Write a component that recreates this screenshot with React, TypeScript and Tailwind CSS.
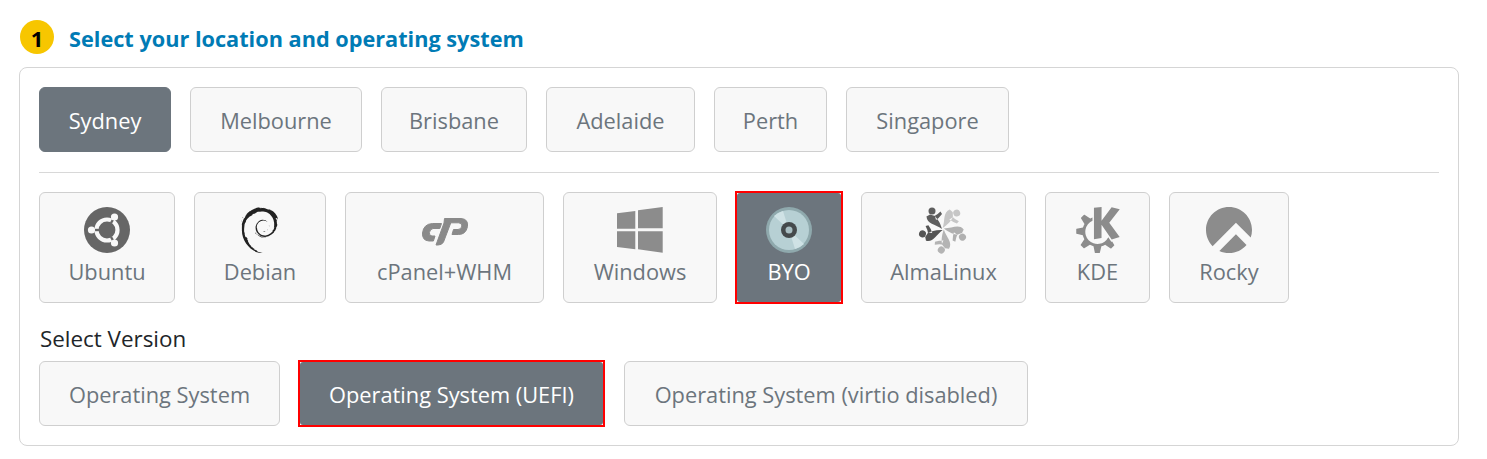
import React from "react";
import { SiDebian, SiKde, SiRockylinux } from "react-icons/si";

const font = "font-['Open_Sans','Noto_Sans',sans-serif]";

function Ubuntu() {
  return (
    <svg width="46" height="46" viewBox="0 0 46 46">
      <circle cx="23" cy="23" r="23" fill="#666666" />
      <circle cx="23" cy="23" r="10.5" fill="none" stroke="#f8f8f8" strokeWidth="4.2" />
      <g stroke="#666666" strokeWidth="2.4">
        <line x1="27" y1="16" x2="32" y2="7.5" />
        <line x1="27" y1="30" x2="32" y2="38.5" />
        <line x1="15" y1="23" x2="5" y2="23" />
      </g>
      <circle cx="30.5" cy="10" r="3.6" fill="#f8f8f8" />
      <circle cx="30.5" cy="36" r="3.6" fill="#f8f8f8" />
      <circle cx="7.5" cy="23" r="3.6" fill="#f8f8f8" />
    </svg>
  );
}

function CPanel() {
  return (
    <svg width="60" height="44" viewBox="0 0 60 44" fill="#8a8a8a" stroke="#8a8a8a" strokeWidth="1" strokeLinejoin="round">
      <path d="M17.5 15.5 H26.5 L24.8 20.5 H18 Q15 21 14.4 24.5 Q14 28 17 28 H20 L18.4 33 H14 Q7 32.5 7.5 25 Q8.5 16 17.5 15.5 Z" />
      <path d="M29.5 10.5 H46 Q53.5 11 52.5 18.5 Q51 26.5 43.5 26.5 H37 L38.5 21.5 H43 Q46.3 21.5 46.9 18 Q47 14.8 43.5 14.8 H35.8 L28.5 34 Q27 37 23 37 H21 L29 15 Z" />
    </svg>
  );
}

function Windows() {
  return (
    <svg width="60" height="56" viewBox="0 0 60 56" fill="#8c8c8c">
      <polygon points="7,11.3 25.3,9 25.3,26.7 7,26.7" />
      <polygon points="28,8.3 52.7,5 52.7,26.3 28,26.3" />
      <polygon points="7,29.3 25.3,29.3 25.3,47.3 7,45" />
      <polygon points="28,29.3 52.7,29.3 52.7,50.7 28,47.3" />
    </svg>
  );
}

function Disc() {
  return (
    <svg width="46" height="46" viewBox="0 0 46 46">
      <circle cx="23" cy="23" r="23" fill="#8fa9ad" />
      <circle cx="23" cy="23" r="20" fill="#b7d0d4" />
      <path d="M23 23 L8 9 A20 20 0 0 1 17 4 Z" fill="#cfe2e5" />
      <path d="M23 23 L38 37 A20 20 0 0 1 29 42 Z" fill="#cfe2e5" />
      <circle cx="23" cy="23" r="8" fill="#454a4c" />
      <circle cx="23" cy="23" r="3.5" fill="#a9bfc3" />
    </svg>
  );
}

function Alma() {
  const figures = [
    { a: 0, c: "#5e5e5e" },
    { a: 72, c: "#c6c6c6" },
    { a: 144, c: "#b0b0b0" },
    { a: 216, c: "#b4b4b4" },
    { a: 288, c: "#555555" },
  ];
  return (
    <svg width="56" height="52" viewBox="0 0 56 52">
      {figures.map((f) => (
        <g key={f.a} transform={`rotate(${f.a} 27 25)`} fill={f.c}>
          <circle cx="16" cy="7" r="3.5" />
          <path d="M10.5 12.5 C11 20 19 20 26 25 C24 18 21 14 18.5 12 Q21 11 24.5 7.5 L26 10 Q23 14 20 16 Z" />
          <path d="M10.5 12.5 L14 10.5 L19 12 L20 16 L15 17 Z" />
        </g>
      ))}
    </svg>
  );
}

function Loc({ label, w, active }: { label: string; w: string; active?: boolean }) {
  return (
    <button
      className={`${w} h-[65px] shrink-0 rounded-[6px] border pt-[4px] text-[21.8px] ${
        active ? "border-[#6c757d] bg-[#6c757d] text-white" : "border-[#cfcfcf] bg-[#f8f8f8] text-[#6c757d]"
      }`}
    >
      {label}
    </button>
  );
}

function Os({ label, w, icon, active }: { label: string; w: string; icon: React.ReactNode; active?: boolean }) {
  if (active) {
    return (
      <div className={`${w} -mx-px -my-px h-[113px] shrink-0 border-2 border-[#ff0000] bg-white`}>
        <div className="flex h-full w-full flex-col items-center rounded-[3px] bg-[#6c757d] pt-[12px] text-[21.8px] text-white">
          <div className="flex h-[50px] items-center justify-center">{icon}</div>
          <span className="mt-[2px] leading-[30px]">{label}</span>
        </div>
      </div>
    );
  }
  return (
    <div className={`${w} flex h-[111px] shrink-0 flex-col items-center rounded-[6px] border border-[#cfcfcf] bg-[#f8f8f8] pt-[12px] text-[21.8px] text-[#6c757d]`}>
      <div className="flex h-[50px] items-center justify-center">{icon}</div>
      <span className="mt-[2px] leading-[30px]">{label}</span>
    </div>
  );
}

export default function App() {
  return (
    <div className={`${font} min-h-[459px] bg-white px-[19px] pt-5`}>
      <div className="flex h-[34px] items-center">
        <div className="ml-px flex h-[34px] w-[34px] items-center justify-center rounded-full bg-[#f7c600] pt-[2px] text-[22px] font-bold text-black">1</div>
        <h2 className="ml-[15px] pt-[5px] text-[21.7px] font-bold text-[#007bb5]">Select your location and operating system</h2>
      </div>
      <div className="mt-[13px] h-[379px] w-[1440px] rounded-lg border border-[#d5d5d5] p-[19px]">
        <div className="flex gap-[19px]">
          <Loc label="Sydney" w="w-[132px]" active />
          <Loc label="Melbourne" w="w-[172px]" />
          <Loc label="Brisbane" w="w-[146px]" />
          <Loc label="Adelaide" w="w-[149px]" />
          <Loc label="Perth" w="w-[113px]" />
          <Loc label="Singapore" w="w-[163px]" />
        </div>
        <div className="mb-[19px] mt-5 h-px bg-[#d8d8d8]" />
        <div className="flex gap-[19px]">
          <Os label="Ubuntu" w="w-[136px]" icon={<Ubuntu />} />
          <Os label="Debian" w="w-[132px]" icon={<SiDebian size={46} color="#222222" />} />
          <Os label="cPanel+WHM" w="w-[199px]" icon={<CPanel />} />
          <Os label="Windows" w="w-[154px]" icon={<Windows />} />
          <Os label="BYO" w="w-[108px]" active icon={<Disc />} />
          <Os label="AlmaLinux" w="w-[165px]" icon={<Alma />} />
          <Os label="KDE" w="w-[105px]" icon={<SiKde size={46} color="#8c8c8c" />} />
          <Os label="Rocky" w="w-[120px]" icon={<SiRockylinux size={46} color="#8c8c8c" />} />
        </div>
        <div className="mb-[7px] ml-px mt-[21px] text-[22.4px] leading-[30px] text-[#212529]">Select Version</div>
        <div className="flex gap-[19px]">
          <Loc label="Operating System" w="w-[241px]" />
          <div className="-my-px -ml-px h-[67px] w-[307px] shrink-0 border-2 border-[#ff0000] bg-white">
            <div className="flex h-full items-center justify-center rounded-[3px] bg-[#6c757d] pt-[4px] text-[21.8px] text-white">Operating System (UEFI)</div>
          </div>
          <Loc label="Operating System (virtio disabled)" w="w-[404px]" />
        </div>
      </div>
    </div>
  );
}
